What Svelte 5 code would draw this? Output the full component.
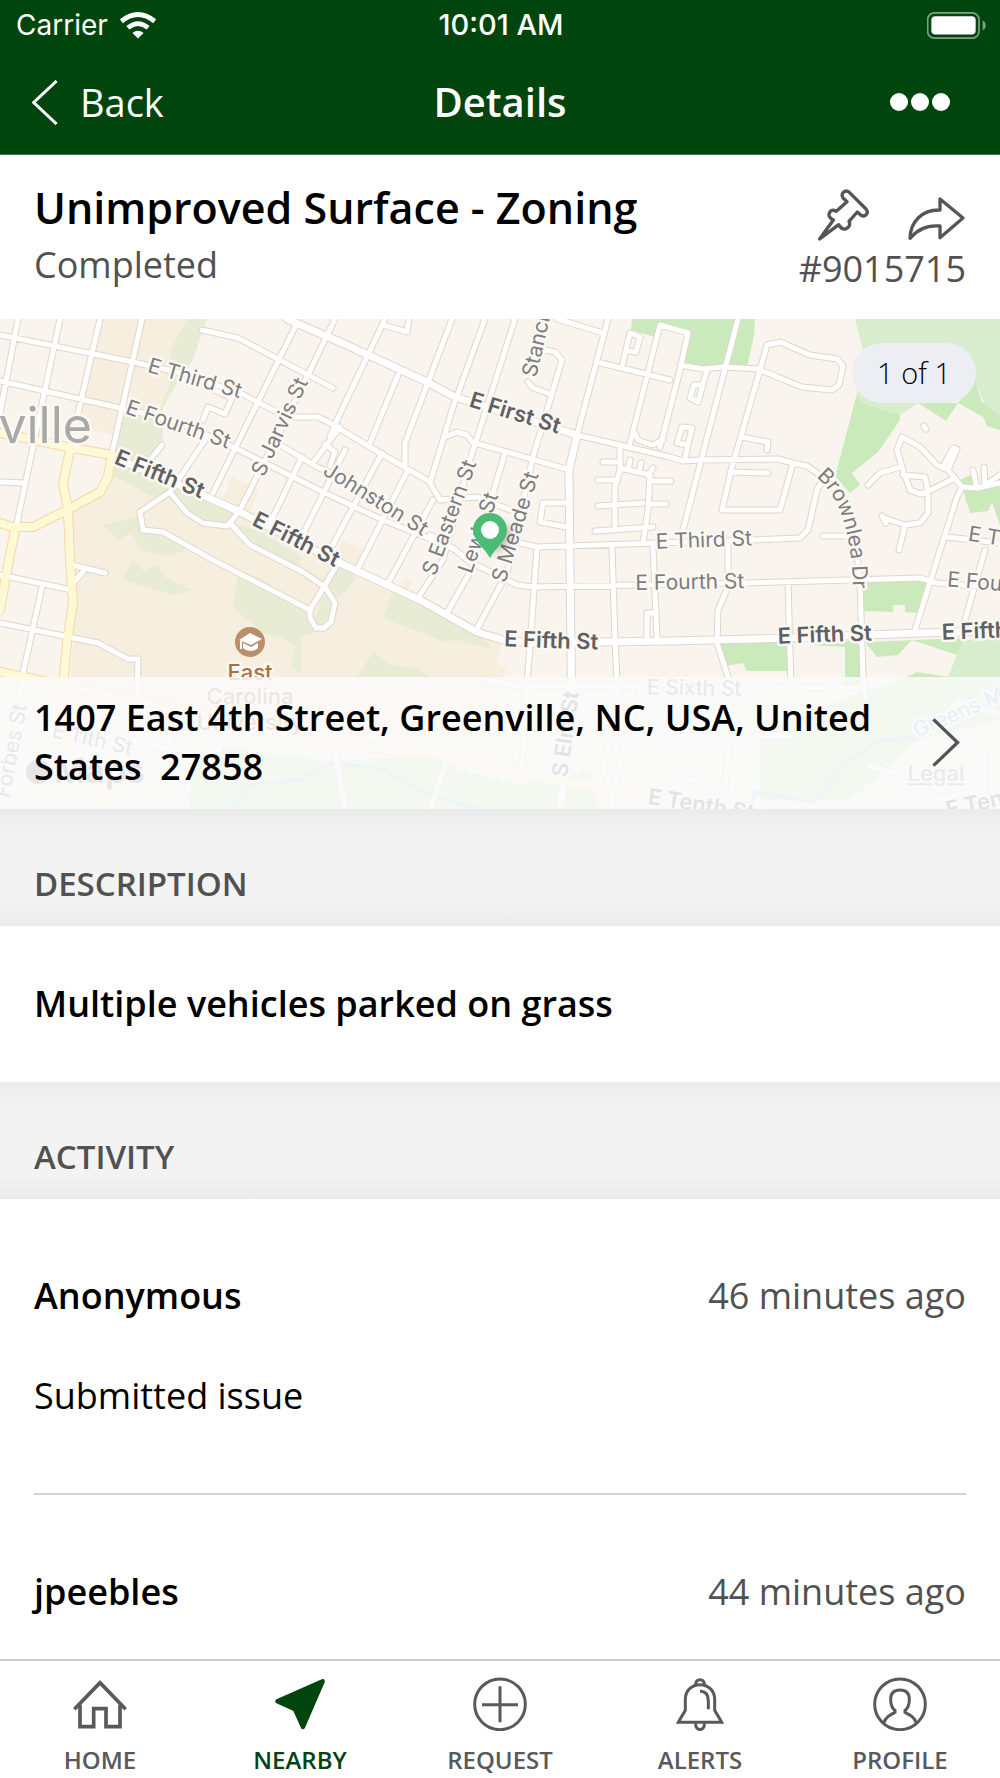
<script lang="ts">
  interface Activity {
    author: string;
    time: string;
    text: string;
  }

  interface Label {
    text: string;
    x: number;
    y: number;
    angle: number;
    kind?: 'major' | 'water';
  }

  const tabs = [
    { id: 'home', label: 'HOME' },
    { id: 'nearby', label: 'NEARBY' },
    { id: 'request', label: 'REQUEST' },
    { id: 'alerts', label: 'ALERTS' },
    { id: 'profile', label: 'PROFILE' },
  ];

  let activeTab = $state('nearby');

  const activities: Activity[] = [
    { author: 'Anonymous', time: '46 minutes ago', text: 'Submitted issue' },
    { author: 'jpeebles', time: '44 minutes ago', text: '' },
  ];

  // map areas
  const campus = [
    'M113 455L240 512L350 568L477 632L503 640L496 663L506 668L500 700L500 745L340 735L70 695L75 600L71 512L105 495Z',
    'M100 319H187L170 395L150 412L118 410L112 435L78 425Z',
    'M232 477L260 490L250 510L222 500Z',
    'M341 540L363 550L355 565L338 556Z',
    'M405 577L412 580L408 590L401 587Z',
  ];
  const olive = [
    'M187 319H207L193 360L178 382L163 407V440L150 460L172 472L205 497L238 513L228 525L203 520L187 512L172 495L163 502L140 490L113 475V455L122 417L160 408L173 375L170 350Z',
    'M103 525L140 516L150 530L195 545L170 557L140 550L132 533L118 540Z',
    'M133 560L145 572L157 565L165 577L192 590L173 595L122 580Z',
    'M238 570L263 580L310 612L330 628L301 637V672L290 668L296 647L280 637L263 633L233 608Z',
    'M232 522L262 532L300 557L300 568L247 545Z',
    'M325 587L337 565L357 577L345 592L335 600L330 623L315 620Z',
    'M393 590L477 632L493 650L457 640L445 642L383 618Z',
    'M373 652L390 665L418 668L430 677H357Z',
  ];
  const parks = [
    'M632 319H755L754 335L747 367L682 365L689 333L660 325L655 337L631 330Z',
    'M857 393L862 403L900 415V420L878 452L852 473L860 485L850 493L835 477Z',
    'M918 403H958L975 380L982 402L1000 416V430L987 426L983 417L958 403L946 421Z',
    'M960 480L972 474V487H1000V525L992 502L988 511L970 513Z',
    'M863 582L927 580L917 613L905 612V605H893V612L863 611Z',
    'M720 643H788V671H747L743 663L725 666Z',
    'M810 645L860 640L864 690H845V647Z',
    'M865 642L965 638L957 655L912 640L898 655L877 657Z',
    'M917 672L950 677L1000 690V720L920 740L850 800H760V735L865 690L890 685Z',
    'M190 760L230 748L330 762L430 755L460 770L520 785L590 770L600 809H190Z',
  ];
  const golf = [
    'M855 319H1000V417L985 405L977 385L918 403L900 415L862 403L857 393L863 350Z',
    'M963 640L1000 638V700L948 677Z',
  ];

  const highways = [
    'M0 433L67 447L112 455L108 477L100 492L67 510L33 527H13L0 523',
    'M70 450L63 483L68 510L70 560L73 603L67 643L60 720L67 747L110 809',
    'M15 530L7 570L0 610',
    'M0 672L167 707L340 745L440 755L537 777L670 800L720 809',
  ];
  const avenues = [
    'M287 319L340 342L427 382L455 397L577 435L569 470L570 570L572 730L560 809',
    'M113 457L207 497L240 512L340 563L420 600L477 632L503 640L530 643L670 641L790 638L920 633L1000 631',
  ];
  const streets = [
    // grid west of downtown
    'M0 335L133 362L177 372L240 393L283 415L290 417H318L330 423L380 453L430 482',
    'M0 381L120 408L173 420L233 447L323 492L383 520L453 548L470 562L517 585L533 587L637 585L747 583L920 578L937 583L1000 588',
    'M18 319L0 413M60 319L35 437L17 523M100 319L78 413M142 319L112 453M0 482L24 483',
    'M202 330L238 338L333 388M297 323L213 493M335 319L307 377L240 510M162 445L150 460',
    'M210 388L232 398L225 414L208 407L203 420M207 437L170 492',
    'M277 443L317 467L340 477M302 457L270 523M345 450L300 540M340 427L313 463M325 444L335 452L330 466',
    // campus drives
    'M170 492L140 512L143 530L163 532L213 560L310 610M170 492L187 513L203 523L227 526L238 513M230 523L250 545L303 572L325 587',
    'M340 560L310 610V618L316 628H324L331 622L335 603L325 587M72 565L105 573M83 572L73 583',
    'M0 575L72 590M42 587L23 673L10 760M0 623L98 643L128 659H138L137 697',
    // between First and Fourth
    'M385 319L337 420L330 437M383 325L407 332L409 319M398 375L370 443M452 319L405 443V465',
    'M485 319L453 407L430 483L440 500L477 497L510 510M445 437L457 432L467 435L475 445M515 319L487 407L470 460L443 560L418 598',
    'M475 443L570 470M505 453L493 493L473 567L447 613M545 350L555 352L562 360L533 457L507 573L478 627M528 382L533 388L550 394',
    'M430 535L455 550M408 470L357 570M433 500L387 585M382 453L330 550',
    'M557 319L603 333M608 319L577 435L670 457L683 461L700 460L778 459L793 463L807 466L820 475L833 487L846 510L855 535L860 583L863 677L865 697',
    'M597 362L670 380M622 367L630 333L640 337L636 352L626 351M660 325L630 443M660 325L688 333L680 370L660 447',
    'M635 433L638 440L652 445L663 440M567 503H543L540 522L567 527',
    // apartment lots
    'M620 448V470L615 487V527M603 462H620M598 480H618M598 506L643 503M595 531L653 527M620 468L650 475L648 510L643 543',
    'M650 481H671M650 504H666M630 460L628 470M641 463L639 472M653 468L648 476',
    'M520 543L537 547L657 543L753 540L800 538L808 530L817 490L822 480',
    'M537 547L530 647L527 683L522 770M612 547L615 640L618 700L600 787M653 547L657 637M647 637V613H655',
    'M738 319L683 530M680 365L703 369L723 367L760 369M707 370L698 402L690 398L694 385H703',
    'M760 370L767 345L780 342L810 355L837 359L843 366L839 385L832 390L802 387L760 370L732 467L722 510H780L793 463',
    'M742 437L768 442L767 450M730 472L768 473M685 458L688 445L677 443L682 427L692 428L688 445M823 536H850',
    'M728 543V587L718 610L717 643L730 683M788 582L791 687M487 680L517 686H670L863 688',
    // Brownlea cul-de-sacs
    'M902 437L920 447L937 465L948 470L962 487L977 488L1000 483M902 437L897 450L902 467L910 490L920 494L927 492L955 478',
    'M903 475L925 477L928 492V513L920 523L905 525L884 518M905 525L899 550M900 467L880 473L868 485M943 467L953 448L957 449L948 470',
    'M973 470L977 488M984 467L985 485L1000 475M962 487L957 497L937 560L915 630M947 537L1000 543M985 550L965 620M882 516L886 523M924 426L926 429',
    // south side, under the address strip
    'M170 707V760M30 720L200 755M225 730L215 760M448 757L430 809M640 690L620 760L610 809M730 735L725 790L660 770M790 736H660',
    'M1000 715L960 700L930 730M870 765L900 775L920 809M940 740L985 750V790L930 800M335 750L345 809M190 785L180 809',
  ];
  const creek = 'M750 809L755 792L812 802L850 760L880 740L920 738M230 809L250 785L300 780L330 763L380 768L430 795L480 809';

  const labels: Label[] = [
    { text: 'E Third St', x: 193, y: 385, angle: 16 },
    { text: 'E Fourth St', x: 176, y: 431, angle: 19 },
    { text: 'E Fifth St', x: 157, y: 481, angle: 22, kind: 'major' },
    { text: 'E Fifth St', x: 293, y: 546, angle: 27, kind: 'major' },
    { text: 'S Jarvis St', x: 286, y: 430, angle: -65 },
    { text: 'Johnston St', x: 372, y: 505, angle: 32 },
    { text: 'E First St', x: 513, y: 420, angle: 17, kind: 'major' },
    { text: 'S Eastern St', x: 456, y: 520, angle: -70 },
    { text: 'Lewis St', x: 485, y: 535, angle: -71 },
    { text: 'S Meade St', x: 522, y: 529, angle: -73 },
    { text: 'Stanci', x: 543, y: 348, angle: -77 },
    { text: 'E Third St', x: 704, y: 547, angle: -2 },
    { text: 'E Fourth St', x: 690, y: 589, angle: -1 },
    { text: 'E Fifth St', x: 551, y: 648, angle: 2, kind: 'major' },
    { text: 'E Fifth St', x: 825, y: 642, angle: -2, kind: 'major' },
    { text: 'E Fifth St', x: 989, y: 638, angle: -2, kind: 'major' },
    { text: 'E Third St', x: 1015, y: 548, angle: 9 },
    { text: 'E Fourth St', x: 1001, y: 591, angle: 5 },
    { text: 'E Sixth St', x: 694, y: 695, angle: 1 },
    { text: 'S Elm St', x: 573, y: 735, angle: -82, kind: 'major' },
    { text: 'E 11th St', x: 91, y: 746, angle: 13 },
    { text: 'Forbes St', x: 18, y: 752, angle: -79 },
    { text: 'E Tenth St', x: 700, y: 812, angle: 9, kind: 'major' },
    { text: 'E Tenth St', x: 1000, y: 806, angle: -12, kind: 'major' },
    { text: 'Greens Mill', x: 968, y: 716, angle: -23, kind: 'water' },
  ];
</script>

<div class="app">
  <header class="topbar">
    <div class="status">
      <span class="carrier">
        Carrier
        <svg class="wifi" viewBox="0 0 110 80" aria-hidden="true">
          <path d="M4 27Q55 -14 106 27" stroke-width="15" />
          <path d="M24 47Q55 21 86 47" stroke-width="14" />
          <path class="solid" d="M38 63Q55 49 72 63L55 80Z" />
        </svg>
      </span>
      <span class="clock">10:01 AM</span>
      <svg class="battery" viewBox="0 0 177 80" aria-hidden="true">
        <rect class="shell" x="2" y="2" width="154" height="76" rx="20" />
        <rect class="charge" x="13" y="12" width="133" height="55" rx="12" />
        <path class="nub" d="M167 25Q176 29 176 40T167 54Z" />
      </svg>
    </div>

    <nav class="navbar">
      <button class="back" type="button">
        <svg viewBox="0 0 78 136" aria-hidden="true"><path d="M74 3L5 68L74 133" /></svg>
        Back
      </button>
      <h1>Details</h1>
      <button class="more" type="button" aria-label="More">
        <span></span><span></span><span></span>
      </button>
    </nav>
  </header>

  <main>
    <section class="summary">
      <div>
        <h2>Unimproved Surface - Zoning</h2>
        <p>Completed</p>
      </div>
      <div class="summary-side">
        <div class="summary-actions">
          <button type="button" aria-label="Follow">
            <svg class="pin-icon" viewBox="0 0 156 156" aria-hidden="true">
              <path
                d="M90 38L78 27C70 13 84 0 97 10L147 60C157 73 144 86 131 78L121 69L96 97C101 106 96 118 85 120C75 122 70 116 65 107L8 150L49 93C37 87 33 79 38 70C43 62 50 62 58 67Z"
              />
            </svg>
          </button>
          <button type="button" aria-label="Share">
            <svg class="share-icon" viewBox="0 0 177 135" aria-hidden="true">
              <path d="M99 9L168 66L99 125V90C55 86 28 104 9 127C10 78 45 40 99 42Z" />
            </svg>
          </button>
        </div>
        <p>#9015715</p>
      </div>
    </section>

    <section class="map" aria-label="Issue location">
      <svg viewBox="0 319 1000 490" preserveAspectRatio="xMidYMid slice" aria-hidden="true">
        <rect class="land" y="319" width="1000" height="490" />
        <path class="campus" d={campus.join('')} />
        <path class="olive" d={olive.join('')} />
        <path class="golf" d={golf.join('')} />
        <path class="park" d={parks.join('')} />
        <path class="creek" d={creek} />

        <path class="casing" d={streets.join('')} />
        <path class="casing wide" d={avenues.join('')} />
        <path class="casing highway" d={highways.join('')} />
        <path class="road" d={streets.join('')} />
        <path class="road wide" d={avenues.join('')} />
        <path class="road highway" d={highways.join('')} />

        {#each labels as label}
          <text class="label {label.kind ?? ''}" transform="rotate({label.angle} {label.x} {label.y})" x={label.x} y={label.y}>
            {label.text}
          </text>
        {/each}
        <path id="brownlea" class="guide" d="M816 477C838 494 852 530 853 590" />
        <text class="label along"><textPath href="#brownlea">Brownlea Dr</textPath></text>

        <text class="city" x="92" y="443">ville</text>

        <circle class="school" cx="250" cy="642" r="15" />
        <path class="cap" d="M239 640L250 633L262 639L251 645ZM243 643L251 647L258 643V648Q255 651 251 651Q246 651 243 648ZM240 641H242V649H240Z" />
        <text class="poi" x="250" y="680">East</text>
        <text class="poi" x="250" y="704">Carolina</text>
        <text class="poi" x="250" y="730">University</text>

        <circle class="maps-mark" cx="38" cy="772" r="12" />
        <text class="maps-logo" x="54" y="783">Maps</text>
        <text class="legal" x="936" y="781">Legal</text>

        <path class="marker-shadow" d="M490 556L506 524Q514 532 506 544Z" />
        <path class="marker" d="M490 558C485 548 473 541 473 530A17 17 0 0 1 507 530C507 541 495 548 490 558Z" />
        <circle class="marker-hole" cx="490" cy="530" r="9" />
      </svg>

      <span class="counter">1 of 1</span>

      <button class="address" type="button">
        <span>1407 East 4th Street, Greenville, NC, USA, United States&nbsp; 27858</span>
        <svg viewBox="0 0 84 148" aria-hidden="true"><path d="M4 4L77 74L4 144" /></svg>
      </button>
    </section>

    <h3 class="section-title">DESCRIPTION</h3>
    <p class="description">Multiple vehicles parked on grass</p>

    <h3 class="section-title">ACTIVITY</h3>
    <ul class="activity">
      {#each activities as item}
        <li>
          <div class="activity-head">
            <strong>{item.author}</strong>
            <time>{item.time}</time>
          </div>
          {#if item.text}
            <p>{item.text}</p>
          {/if}
        </li>
      {/each}
    </ul>
  </main>

  <nav class="tabbar">
    {#each tabs as tab}
      <button
        type="button"
        class:active={activeTab === tab.id}
        aria-current={activeTab === tab.id ? 'page' : undefined}
        onclick={() => (activeTab = tab.id)}
      >
        <svg viewBox="0 0 162 162" aria-hidden="true">
          {#if tab.id === 'home'}
            <path class="thick" d="M4 97L81 17L158 97" />
            <path class="thick" d="M21 84V149H62V95H99V149H141V84" />
          {:else if tab.id === 'nearby'}
            <path class="arrow" d="M13 73L149 13L90 150L66 97Z" />
          {:else if tab.id === 'request'}
            <circle cx="81" cy="82" r="76" />
            <path d="M81 28V136M27 83H135" />
          {:else if tab.id === 'alerts'}
            <path d="M16 136L37 100V67C37 40 57 23 81 23C105 23 125 40 125 67V100L146 136Z" />
            <path d="M68 23C67 3 95 3 94 23M68 139C66 164 96 164 94 139M81 42C100 43 106 54 106 72V97" />
          {:else}
            <circle cx="81" cy="82" r="76" />
            <path
              d="M32 138C38 121 49 115 66 106V100C56 94 53 84 53 67C53 48 63 39 81 39C99 39 109 48 109 67C109 84 106 94 96 100V106C113 115 124 121 130 138"
            />
          {/if}
        </svg>
        <span>{tab.label}</span>
      </button>
    {/each}
  </nav>
</div>

<style>
  :global(body) {
    margin: 0;
  }

  .app {
    --brand: #00440e;
    --muted: #515151;
    display: flex;
    flex-direction: column;
    height: 100vh;
    background: #fff;
    color: #000;
    font-family: 'Open Sans', 'Noto Sans', sans-serif;
    font-size: 36px;
    line-height: 48px;
  }

  h1,
  h2,
  h3,
  p,
  ul {
    margin: 0;
    padding: 0;
  }

  button {
    border: 0;
    padding: 0;
    background: none;
    color: inherit;
    font: inherit;
    cursor: pointer;
  }

  svg {
    display: block;
    fill: none;
  }

  /* top bar */
  .topbar {
    flex-shrink: 0;
    background: var(--brand);
    border-bottom: 1px solid #3f7348;
    color: #fff;
  }

  .status {
    display: grid;
    grid-template-columns: 1fr auto 1fr;
    align-items: center;
    height: 50px;
    padding: 0 14px 0 16px;
    font-family: Inter, Roboto, sans-serif;
    font-size: 28px;
    line-height: 32px;
  }

  .carrier {
    display: flex;
    align-items: center;
    gap: 12px;
  }

  .clock {
    font-size: 29px;
    font-weight: 500;
  }

  .wifi {
    width: 36px;
    height: 27px;
    stroke: #fff;
  }

  .wifi .solid {
    fill: #fff;
    stroke: none;
  }

  .battery {
    justify-self: end;
    width: 59px;
    height: 27px;
  }

  .shell {
    stroke: #7fa186;
    stroke-width: 5;
  }

  .charge {
    fill: #fff;
  }

  .nub {
    fill: #7fa186;
  }

  .navbar {
    display: grid;
    grid-template-columns: 1fr auto 1fr;
    align-items: center;
    height: 104px;
    padding: 0 32px;
  }

  .back {
    justify-self: start;
    display: flex;
    align-items: center;
    gap: 22px;
    font-size: 38px;
  }

  .back svg {
    width: 26px;
    height: 45px;
    stroke: #fff;
    stroke-width: 9;
  }

  h1 {
    font-size: 40px;
    font-weight: 600;
  }

  .more {
    justify-self: end;
    display: flex;
    gap: 3px;
    margin-right: 18px;
  }

  .more span {
    width: 18px;
    height: 18px;
    border-radius: 50%;
    background: #fff;
  }

  main {
    flex: 1;
    min-height: 0;
    overflow: hidden auto;
    scrollbar-width: none;
  }

  /* summary */
  .summary {
    display: flex;
    justify-content: space-between;
    padding: 28px 34px 26px;
  }

  .summary h2 {
    margin-bottom: 8px;
    font-size: 43px;
    font-weight: 600;
    line-height: 50px;
  }

  .summary p {
    color: var(--muted);
  }

  .summary-side {
    text-align: right;
  }

  .summary-actions {
    display: flex;
    align-items: end;
    justify-content: flex-end;
    gap: 38px;
    height: 58px;
    margin-bottom: 4px;
  }

  .summary-actions svg {
    stroke: #555;
    stroke-width: 10;
    stroke-linejoin: round;
  }

  .pin-icon {
    width: 52px;
    height: 52px;
  }

  .share-icon {
    width: 59px;
    height: 45px;
  }

  /* map */
  .map {
    position: relative;
  }

  .map > svg {
    width: 100%;
    height: 490px;
  }

  .land {
    fill: #f9f4ed;
  }

  .campus {
    fill: #f6eedf;
  }

  .olive {
    fill: #e9ecd5;
  }

  .golf {
    fill: #d8edcd;
  }

  .park {
    fill: #cbeabc;
  }

  .creek {
    stroke: #a5d4f5;
    stroke-width: 3;
  }

  .casing,
  .road {
    stroke-linecap: round;
    stroke-linejoin: round;
  }

  .casing {
    stroke: #dfd6cc;
    stroke-width: 7;
  }

  .road {
    stroke: #fff;
    stroke-width: 5;
  }

  .casing.wide {
    stroke-width: 9;
  }

  .road.wide {
    stroke-width: 7;
  }

  .casing.highway {
    stroke: #fcd5a4;
    stroke-width: 10;
  }

  .road.highway {
    stroke: #fdf9d5;
    stroke-width: 8;
  }

  .map text {
    font-family: Inter, Roboto, sans-serif;
    text-anchor: middle;
    paint-order: stroke;
    stroke: #fbf8f3;
    stroke-width: 5;
    stroke-linejoin: round;
  }

  .map .label {
    fill: #7d7d7d;
    font-size: 21px;
  }

  .map .label.major {
    fill: #5f6062;
    font-size: 22px;
    font-weight: 600;
  }

  .map .label.water {
    fill: #6fb2dc;
  }

  .map .along {
    text-anchor: start;
  }

  .map .city {
    fill: #a9a9a5;
    font-size: 50px;
    text-anchor: end;
  }

  .map .poi {
    fill: #a9713f;
    font-size: 22px;
    font-weight: 500;
  }

  .map .legal {
    fill: #8a8a8a;
    font-size: 22px;
    font-weight: 500;
    text-decoration: underline;
  }

  .map .maps-logo {
    fill: #777;
    font-size: 34px;
    font-weight: 600;
    text-anchor: start;
  }

  .maps-mark {
    fill: #777;
  }

  .school {
    fill: #b98f6b;
  }

  .cap,
  .marker-hole {
    fill: #fff;
  }

  .marker {
    fill: #4bbb76;
  }

  .marker-shadow {
    fill: #000;
    opacity: 0.3;
    filter: blur(4px);
  }

  .counter {
    position: absolute;
    top: 24px;
    right: 24px;
    padding: 6px 25px;
    border-radius: 30px;
    background: #edeef3;
    font-size: 29px;
    font-weight: 300;
  }

  .address {
    position: absolute;
    right: 0;
    bottom: 0;
    left: 0;
    display: flex;
    align-items: center;
    justify-content: space-between;
    gap: 40px;
    padding: 16px 40px 18px 34px;
    background: rgba(250, 250, 250, 0.85);
    font-weight: 600;
    line-height: 49px;
    text-align: left;
  }

  .address svg {
    flex-shrink: 0;
    width: 28px;
    height: 49px;
    stroke: #555;
    stroke-width: 10;
  }

  /* sections */
  .section-title {
    padding: 51px 34px 18px;
    background: linear-gradient(#ebebeb, #f3f3f3 22%, #f3f3f3 80%, #ebebeb);
    color: var(--muted);
    font-size: 33px;
    font-weight: 600;
  }

  .description {
    padding: 54px 34px;
    font-weight: 600;
  }

  .activity {
    list-style: none;
    padding: 0 34px;
  }

  .activity li {
    padding: 73px 0;
    border-bottom: 2px solid #d2d2d2;
  }

  .activity li:last-child {
    border-bottom: 0;
  }

  .activity-head {
    display: flex;
    justify-content: space-between;
  }

  .activity strong {
    font-weight: 600;
  }

  .activity time {
    color: var(--muted);
  }

  .activity p {
    margin-top: 52px;
  }

  /* tab bar */
  .tabbar {
    flex-shrink: 0;
    display: grid;
    grid-template-columns: repeat(5, 1fr);
    border-top: 2px solid #ccc;
    background: #fff;
  }

  .tabbar button {
    display: flex;
    flex-direction: column;
    align-items: center;
    gap: 13px;
    padding: 16px 0 2px;
    color: #58595d;
    font-size: 24px;
    font-weight: 600;
    line-height: 32px;
  }

  .tabbar svg {
    width: 54px;
    height: 54px;
    stroke: currentColor;
    stroke-width: 9;
  }

  .tabbar .thick {
    stroke-width: 11;
  }

  .tabbar .arrow {
    fill: currentColor;
    stroke-width: 13;
    stroke-linejoin: round;
  }

  .tabbar .active {
    color: var(--brand);
  }
</style>
